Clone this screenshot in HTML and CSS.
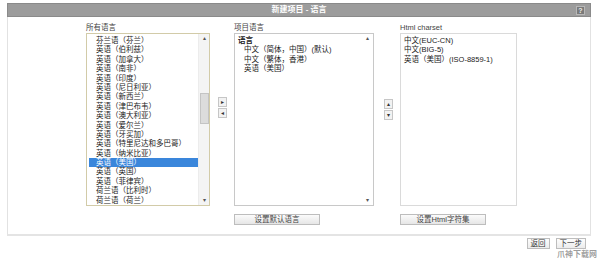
FILE: index.html
```html
<!DOCTYPE html>
<html>
<head>
<meta name="viewport" content="width=device-width, initial-scale=1">
<link rel="stylesheet" href="styles.css">
</head>
<body>

<div class="dialog">
  <div class="titlebar">
    <span class="title">新建项目 - 语言</span>
    <span class="help">?</span>
  </div>

  <div class="content">
    <div class="col col-all">
      <div class="label">所有语言</div>
      <div class="listbox box-all">
        <div class="items">
          <div class="item">芬兰语（芬兰）</div>
          <div class="item">英语（伯利兹）</div>
          <div class="item">英语（加拿大）</div>
          <div class="item">英语（南非）</div>
          <div class="item">英语（印度）</div>
          <div class="item">英语（尼日利亚）</div>
          <div class="item">英语（新西兰）</div>
          <div class="item">英语（津巴布韦）</div>
          <div class="item">英语（澳大利亚）</div>
          <div class="item">英语（爱尔兰）</div>
          <div class="item">英语（牙买加）</div>
          <div class="item">英语（特里尼达和多巴哥）</div>
          <div class="item">英语（纳米比亚）</div>
          <div class="item selected">英语（美国）</div>
          <div class="item">英语（英国）</div>
          <div class="item">英语（菲律宾）</div>
          <div class="item">荷兰语（比利时）</div>
          <div class="item">荷兰语（荷兰）</div>
        </div>
        <div class="scrollbar">
          <span class="arrow">&#9652;</span>
          <span class="thumb"></span>
          <span class="arrow">&#9662;</span>
        </div>
      </div>
    </div>

    <div class="movers">
      <button class="tiny">&#9656;</button>
      <button class="tiny">&#9666;</button>
    </div>

    <div class="col col-project">
      <div class="label">项目语言</div>
      <div class="listbox box-project">
        <div class="items">
          <div class="item group">语言</div>
          <div class="item sub">中文（简体，中国）(默认)</div>
          <div class="item sub">中文（繁体，香港）</div>
          <div class="item sub">英语（美国）</div>
        </div>
        <div class="scrollbar plain">
          <span class="arrow">&#9652;</span>
          <span class="arrow">&#9662;</span>
        </div>
      </div>
      <button class="action">设置默认语言</button>
    </div>

    <div class="movers">
      <button class="tiny">&#9652;</button>
      <button class="tiny">&#9662;</button>
    </div>

    <div class="col col-charset">
      <div class="label">Html charset</div>
      <div class="listbox box-charset">
        <div class="items">
          <div class="item">中文(EUC-CN)</div>
          <div class="item">中文(BIG-5)</div>
          <div class="item">英语（美国）(ISO-8859-1)</div>
        </div>
      </div>
      <button class="action">设置Html字符集</button>
    </div>
  </div>

  <div class="footer">
    <button class="navbtn">返回</button>
    <button class="navbtn">下一步</button>
  </div>
</div>

<div class="watermark">爪神下载网</div>

</body>
</html>
```

FILE: styles.css
```css
* {
  box-sizing: border-box;
}

body {
  margin: 0;
  background-color: white;
  font-family: "Liberation Sans", "Noto Sans CJK SC", sans-serif;
  font-size: 8px;
  color: #222;
}

.dialog {
  margin: 3px 9px 0 7px;
}

/* Gray title strip */
.titlebar {
  position: relative;
  height: 14px;
  background-color: #9c9c9c;
  border: 1px solid #8a8a8a;
  text-align: center;
  line-height: 12px;
}

.title {
  color: white;
  font-weight: bold;
  font-size: 8px;
}

.help {
  position: absolute;
  right: 5px;
  top: 2px;
  width: 9px;
  height: 9px;
  background-color: #7a7a7a;
  border: 1px solid #b8b8b8;
  color: #eee;
  font-size: 7px;
  line-height: 7px;
  font-weight: bold;
}

.content {
  display: flex;
  align-items: flex-start;
  height: 219px;
  padding: 6px 0 0 78px;
  border-left: 1px solid #e2e2e2;
  border-right: 1px solid #e2e2e2;
  border-bottom: 2px solid #e4e4e4;
}

.col {
  display: flex;
  flex-direction: column;
}

.label {
  height: 10px;
  line-height: 9px;
  color: #444;
  font-size: 7.5px;
}

.listbox {
  display: flex;
  height: 173px;
  background-color: white;
  border: 1px solid #d2cba8;
}

.box-all {
  width: 124px;
}

.box-project {
  width: 140px;
  border-color: #c8c8c8;
}

.box-charset {
  width: 117px;
  border-color: #dadada;
}

.items {
  flex: 1;
  padding: 2px 0 0 2px;
}

.item {
  height: 9.4px;
  line-height: 9.4px;
  padding-left: 7px;
  white-space: nowrap;
  font-size: 7.5px;
  color: #1a1a1a;
}

.box-charset .item {
  padding-left: 1px;
}

.item.selected {
  background-color: #3a86db;
  color: white;
  margin-right: -2px;
}

.item.group {
  padding-left: 1px;
  font-weight: bold;
}

.item.sub {
  padding-left: 7px;
}

/* Fake scrollbar */
.scrollbar {
  width: 11px;
  display: flex;
  flex-direction: column;
  align-items: center;
  justify-content: space-between;
  background-color: #f4f4f4;
  border-left: 1px solid #ececec;
}

.scrollbar.plain {
  background-color: white;
  border-left: none;
}

.arrow {
  font-size: 6px;
  line-height: 9px;
  color: #555;
}

.thumb {
  width: 9px;
  height: 31px;
  margin-top: 50px;
  margin-bottom: auto;
  background-color: #dcdcdc;
  border: 1px solid #c4c4c4;
}

.movers {
  width: 24px;
  padding: 74px 0 0 8px;
  display: flex;
  flex-direction: column;
  gap: 1px;
}

.col-project + .movers {
  width: 26px;
  padding: 76px 0 0 10px;
}

.tiny {
  width: 9px;
  height: 10px;
  padding: 0;
  background-color: #f2f2f2;
  border: 1px solid #c6c6c6;
  font-size: 6px;
  line-height: 8px;
  color: #333;
}

.action {
  width: 86px;
  height: 11px;
  margin-top: 8px;
  padding: 0;
  background: linear-gradient(#fbfbfb, #e6e6e6);
  border: 1px solid #bdbdbd;
  font-family: "Liberation Sans", "Noto Sans CJK SC", sans-serif;
  font-size: 7.5px;
  line-height: 9px;
  color: #444;
}

.footer {
  display: flex;
  justify-content: flex-end;
  gap: 6px;
  padding: 2px 5px 0 0;
}

.navbtn {
  height: 11px;
  padding: 0 3px;
  background: linear-gradient(#fdfdfd, #ececec);
  border: 1px solid #bdbdbd;
  font-family: "Liberation Sans", "Noto Sans CJK SC", sans-serif;
  font-size: 7.5px;
  line-height: 9px;
  color: #333;
}

.watermark {
  position: absolute;
  right: 3px;
  bottom: 0;
  line-height: 8px;
  font-family: "Noto Sans CJK SC", sans-serif;
  font-weight: bold;
  font-size: 8px;
  color: rgba(60, 60, 60, 0.5);
}
```
